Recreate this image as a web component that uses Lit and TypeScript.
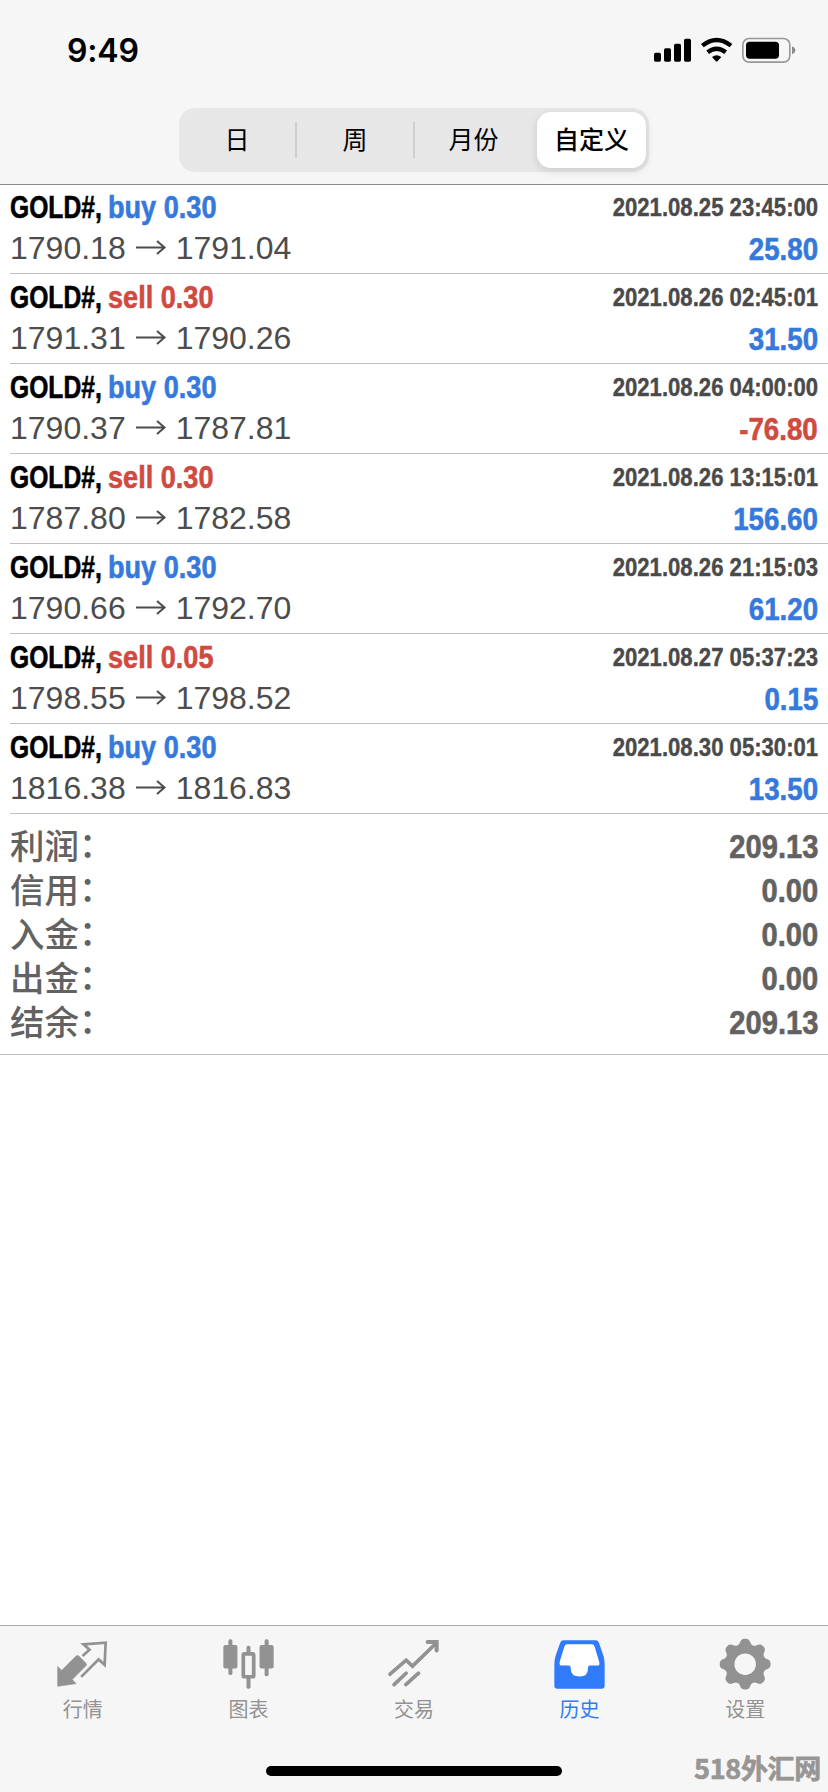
import { LitElement, html, css, svg } from "lit";
import { customElement } from "lit/decorators.js";

interface Deal { side: string; vol: string; from: string; to: string; time: string; profit: string; }

const deals: Deal[] = [
  { side: "buy", vol: "0.30", from: "1790.18", to: "1791.04", time: "2021.08.25 23:45:00", profit: "25.80" },
  { side: "sell", vol: "0.30", from: "1791.31", to: "1790.26", time: "2021.08.26 02:45:01", profit: "31.50" },
  { side: "buy", vol: "0.30", from: "1790.37", to: "1787.81", time: "2021.08.26 04:00:00", profit: "-76.80" },
  { side: "sell", vol: "0.30", from: "1787.80", to: "1782.58", time: "2021.08.26 13:15:01", profit: "156.60" },
  { side: "buy", vol: "0.30", from: "1790.66", to: "1792.70", time: "2021.08.26 21:15:03", profit: "61.20" },
  { side: "sell", vol: "0.05", from: "1798.55", to: "1798.52", time: "2021.08.27 05:37:23", profit: "0.15" },
  { side: "buy", vol: "0.30", from: "1816.38", to: "1816.83", time: "2021.08.30 05:30:01", profit: "13.50" },
];

const totals = [["利润", "209.13"], ["信用", "0.00"], ["入金", "0.00"], ["出金", "0.00"], ["结余", "209.13"]];

const gear = () => {
  const pts: string[] = [];
  const n = 160;
  for (let i = 0; i < n; i++) {
    const a = (i / n) * Math.PI * 2;
    const c = Math.cos(a * 8);
    const r = 67.5 + 8 * Math.tanh((c + 0.2) * 1.3) / Math.tanh(1.4);
    pts.push(`${(78 + r * Math.cos(a)).toFixed(1)} ${(78 + r * Math.sin(a)).toFixed(1)}`);
  }
  return "M" + pts.join("L") + "ZM78 46a32 32 0 1 0 0 64a32 32 0 1 0 0-64Z";
};

const tabs = [
  { label: "行情", icon: svg`<path fill="currentColor" stroke="currentColor" stroke-width="2" stroke-linejoin="round" d="M5 85 17 97 60 54Q64 50 68 54L89 75Q93 79 89 83L48 124 60 136 5 144Z"/><path fill="none" stroke="currentColor" stroke-width="8" d="M79 54 100 35 82 19 148 14 145 80 127 64 75 116"/>` },
  { label: "图表", icon: svg`<g fill="currentColor"><rect x="4" y="21" width="42" height="70" rx="6"/><rect x="19" y="4" width="12" height="106" rx="5"/><rect x="112" y="21" width="42" height="70" rx="6"/><rect x="127" y="4" width="12" height="110" rx="5"/><rect x="73" y="23" width="12" height="24" rx="5"/><rect x="73" y="115" width="12" height="36" rx="5"/></g><rect x="63.500" y="47.500" width="31" height="68" rx="3" fill="none" stroke="currentColor" stroke-width="11"/>` },
  { label: "交易", icon: svg`<g fill="none" stroke="currentColor" stroke-width="11" stroke-linecap="round"><path d="M9 108 57 66 76 84 147 15"/><path d="M121 12H148V37" stroke-width="12"/><path d="M21 139 57 105M56 139 94 105"/></g>` },
  { label: "历史", active: true, icon: svg`<path fill="#fff" d="M30 12H128L145 90H14Z"/><path fill="#fff" d="M50 80H108V118H50Z"/><path fill="currentColor" fill-rule="evenodd" d="M31 7H127Q134 7 137 14L151 55Q154 65 154 80V142Q154 151 145 151H13Q4 151 4 142V80Q4 65 8 52L22 13Q25 7 31 7ZM42 19Q36 19 34 25L20 71Q18 82 25 82H48Q53 82 53 90V92Q53 115 79 115T104 92V90Q104 82 109 82H133Q140 82 138 72L124 25Q122 19 116 19Z"/>` },
  { label: "设置", icon: svg`<path fill="currentColor" fill-rule="evenodd" d="${gear()}"/>` },
];

@customElement("app-root")
export class AppRoot extends LitElement {
  static styles = css`
    :host { display: flex; flex-direction: column; height: 1792px; width: 828px; background: #fff; overflow: hidden; position: relative; font-family: "Liberation Sans", "Noto Sans CJK SC", sans-serif; color: #000; }
    * { box-sizing: border-box; }
    svg { display: block; flex: none; }
    .header { height: 185px; background: #f6f6f6; border-bottom: 1px solid #8b8b8b; flex: none; display: flex; flex-direction: column; }
    .status { height: 108px; padding: 0 32px 9px 67px; display: flex; align-items: center; justify-content: space-between; }
    .clock { font: 600 32px/40px Inter, sans-serif; letter-spacing: -0.2px; padding-top: 2px; }
    .seg { align-self: center; width: 470px; height: 64px; border-radius: 16px; background: #e7e7e7; display: flex; align-items: center; font: 400 25px/36px "Noto Sans CJK SC", sans-serif; }
    .cell { width: 117px; text-align: center; line-height: 33px; padding-bottom: 3px; }
    .cell.bar { border-right: 2px solid #cfcfcf; width: 118px; }
    .cell.on { width: 109px; height: 56px; margin-left: 5px; background: #fff; border-radius: 14px; line-height: 53px; font-weight: 500; box-shadow: 0 3px 10px rgba(0,0,0,.12); }
    .deal { height: 90px; margin-left: 10px; padding-right: 10px; border-bottom: 1px solid #bfbfbf; flex: none; }
    .deal:first-child { height: 89px; }
    .deal:first-child .line:first-child { height: 40px; line-height: 41px; }
    .line { display: flex; justify-content: space-between; height: 41px; line-height: 43px; white-space: pre; }
    .b { font-weight: 700; display: inline-block; transform-origin: 0 50%; font-size: 32px; -webkit-text-stroke: .6px currentColor; }
    .title { display: flex; padding-top: 2px; }
    .sym { width: 98px; }
    .sym .b { transform: scaleX(.77); }
    .op { transform: scaleX(.847); }
    .r { transform-origin: 100% 50%; }
    .time { font-size: 25px; color: #4a4a4a; transform: scaleX(.885); padding-top: 2px; -webkit-text-stroke-width: .4px; }
    .prices { display: flex; align-items: center; font-size: 32px; color: #4c4c4c; padding-top: 6px; }
    .arrow { margin: 0 9px; }
    .profit { transform: scaleX(.865); padding-top: 3px; }
    .blue { color: #3579dc; }
    .red { color: #d04a40; }
    .totals { height: 241px; border-bottom: 1px solid #bfbfbf; padding: 9px 10px 0; color: #626262; flex: none; }
    .total { display: flex; justify-content: space-between; height: 44px; line-height: 47px; }
    .label { font: 500 34.5px/42px "Noto Sans CJK SC", sans-serif; white-space: nowrap; display: flex; }
    .colon { line-height: 38px; }
    .total .b { font-size: 33.5px; transform: scaleX(.87); }
    .tabs { margin-top: auto; height: 167px; border-top: 1px solid #a9a9a9; background: #f6f6f6; display: flex; flex: none; }
    .tab { flex: 1; display: flex; flex-direction: column; align-items: center; color: #929292; padding-top: 12px; }
    .tab.on { color: #2f7bfa; }
    .name { font: 400 20px/30px "Noto Sans CJK SC", sans-serif; margin-top: 3px; }
    .home { position: absolute; left: 266px; top: 1766px; width: 296px; height: 10px; border-radius: 5px; background: #000; }
    .mark { position: absolute; right: 7px; top: 1750px; font: 700 27px/36px "Noto Sans CJK SC", sans-serif; letter-spacing: -.3px; color: #989694; white-space: nowrap; -webkit-text-stroke: .7px currentColor; }
  `;

  render() {
    return html`
      <div class="header">
        <div class="status">
          <span class="clock">9:49</span>
          <svg width="142" height="26" viewBox="0 0 426 78">
            <g><rect x="0" y="47" width="21" height="27" rx="5"/><rect x="30" y="34" width="21" height="40" rx="5"/><rect x="60" y="20" width="21" height="54" rx="5"/><rect x="90" y="5" width="21" height="69" rx="5"/></g>
            <g fill="none" stroke="#000" stroke-width="13"><path d="M145 26Q188-8 231 26"/><path d="M161 46Q188 25 215 46"/></g>
            <path d="M174 60Q188 50 202 60L191 72Q188 75 185 72Z"/>
            <rect x="266.500" y="4.500" width="141" height="71" rx="19" fill="none" stroke="#999" stroke-width="5"/>
            <rect x="276" y="14" width="99" height="51" rx="11"/><path fill="#8b8b8b" d="M414 28Q424 32 424 40T414 52Z"/>
          </svg>
        </div>
        <div class="seg">
          <span class="cell bar">日</span><span class="cell bar">周</span><span class="cell">月份</span><span class="cell on">自定义</span>
        </div>
      </div>
      <div class="list">
        ${deals.map((d) => html`<div class="deal">
          <div class="line">
            <div class="title"><span class="sym"><span class="b">GOLD#,</span></span><span class="b op ${d.side === "buy" ? "blue" : "red"}">${d.side} ${d.vol}</span></div>
            <span class="b r time">${d.time}</span>
          </div>
          <div class="line">
            <div class="prices"><span>${d.from}</span><svg class="arrow" width="32" height="20" viewBox="0 0 32 20"><path d="M1 8.500H29M22 2 29.500 8.500 22 15" fill="none" stroke="#4c4c4c" stroke-width="2"/></svg><span>${d.to}</span></div>
            <span class="b r profit ${d.profit.startsWith("-") ? "red" : "blue"}">${d.profit}</span>
          </div>
        </div>`)}
      </div>
      <div class="totals">${totals.map(([k, v]) => html`<div class="total"><span class="label">${k}<span class="colon">：</span></span><span class="b r">${v}</span></div>`)}</div>
      <div class="tabs">${tabs.map((t) => html`<div class="tab ${t.active ? "on" : ""}"><svg width="53" height="53" viewBox="0 0 158 158">${t.icon}</svg><span class="name">${t.label}</span></div>`)}</div>
      <div class="home"></div>
      <div class="mark">518外汇网</div>
    `;
  }
}
